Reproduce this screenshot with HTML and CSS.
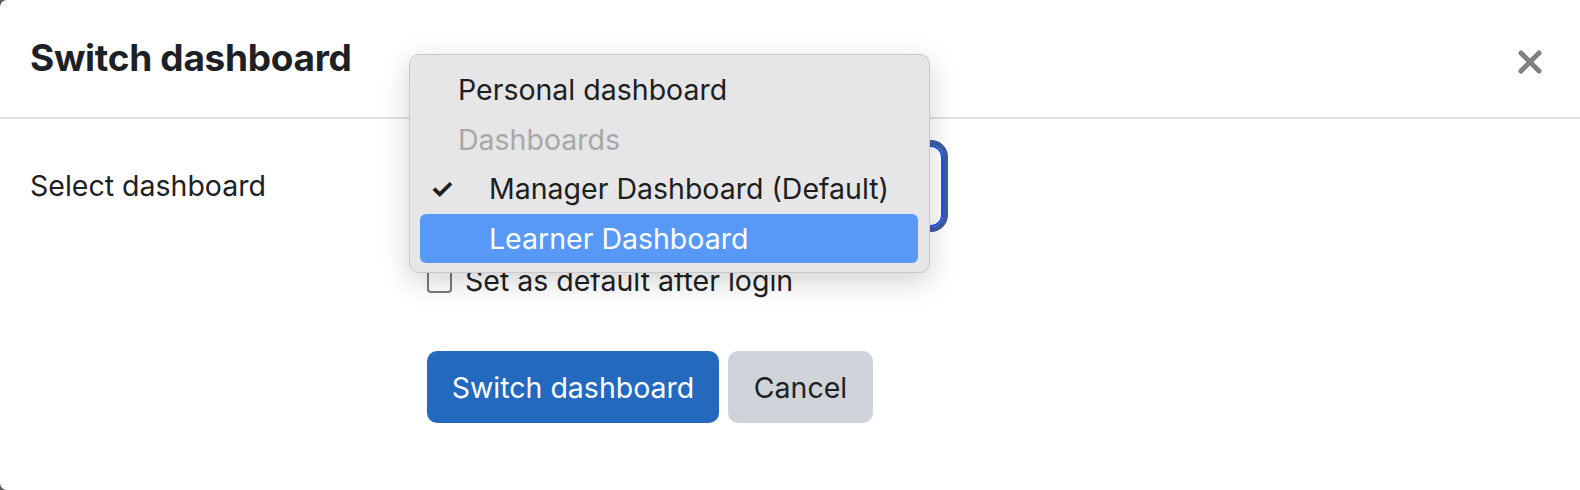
FILE: index.html
```html
<!DOCTYPE html>
<html>
<head>
<meta charset="utf-8">
<link rel="stylesheet" href="styles.css">
</head>
<body>
<div class="modal">
  <div class="modal-header">
    <h5 class="modal-title">Switch dashboard</h5>
    <button class="close" aria-label="Close">
      <svg width="24" height="24" viewBox="0 0 24 24"><path d="M3 3 L21 21 M21 3 L3 21" stroke="#808080" stroke-width="5" stroke-linecap="round"/></svg>
    </button>
  </div>
  <div class="modal-body">
    <div class="form-row">
      <label class="form-label">Select dashboard</label>
      <div class="form-control-col">
        <div class="select-wrap">
          <div class="select"></div>
          <div class="dropdown">
            <div class="opt top">Personal dashboard</div>
            <div class="opt group">Dashboards</div>
            <div class="opt sub checked"><span class="check">✓</span>Manager Dashboard (Default)</div>
            <div class="opt sub hl">Learner Dashboard</div>
          </div>
        </div>
        <label class="checkbox-row"><span class="checkbox"></span>Set as default after login</label>
        <div class="buttons">
          <button class="btn btn-primary">Switch dashboard</button>
          <button class="btn btn-secondary">Cancel</button>
        </div>
      </div>
    </div>
  </div>
</div>
</body>
</html>
```
FILE: styles.css
```css
html, body {
  margin: 0;
  padding: 0;
  background: #5a5a5a;
}
body {
  font-family: Inter, "Noto Sans", sans-serif;
  color: #1d2125;
}
.modal {
  background: #fff;
  height: 490px;
  width: 1580px;
  border-radius: 7px 0 0 7px;
  overflow: hidden;
}
.modal-header {
  height: 117px;
  border-bottom: 2px solid #dee2e6;
  display: flex;
  align-items: center;
  justify-content: space-between;
  padding: 0 38px 0 30px;
  box-sizing: content-box;
}
.modal-title {
  margin: 0;
  font-size: 37px;
  font-weight: 700;
  letter-spacing: -0.3px;
  position: relative;
  top: -1px;
}
.close {
  border: 0;
  background: none;
  padding: 0;
  margin: 0;
  display: flex;
  position: relative;
  top: 3px;
}
.modal-body {
  padding: 26px 30px 0 30px;
}
.form-row {
  display: flex;
}
.form-label {
  width: 397px;
  flex: none;
  font-size: 28.5px;
  line-height: 82px;
  height: 82px;
}
.form-control-col {
  display: flex;
  flex-direction: column;
}
.select-wrap {
  position: relative;
  width: 516px;
  height: 82px;
}
.select {
  box-sizing: border-box;
  height: 82px;
  width: 516px;
  border: 2px solid #1a55e6;
  box-shadow: 0 0 0 5px #3e5aa2;
  border-radius: 12px;
}
.dropdown {
  position: absolute;
  left: -18px;
  top: -91px;
  width: 521px;
  height: 219px;
  box-sizing: border-box;
  background: #e6e6e8;
  border: 1px solid #c9c9cb;
  border-radius: 10px;
  box-shadow: 0 8px 28px rgba(0, 0, 0, 0.18);
  padding: 10px 11px 9px 10px;
  display: flex;
  flex-direction: column;
}
.opt {
  height: 49.5px;
  line-height: 49.5px;
  font-size: 28.5px;
  color: #1e1e1e;
  padding-left: 38px;
  position: relative;
  border-radius: 6px;
  white-space: nowrap;
}
.opt.group {
  color: #a8a8aa;
}
.opt.sub {
  padding-left: 69px;
}
.opt .check {
  position: absolute;
  left: 10px;
  top: 0;
  font-size: 27px;
  font-weight: 700;
}
.opt.hl {
  background: #5899f8;
  color: #fff;
}
.checkbox-row {
  display: flex;
  align-items: center;
  margin-top: 42px;
  font-size: 28.5px;
  height: 23px;
}
.checkbox {
  width: 21px;
  height: 21px;
  border: 2px solid #7a7a7a;
  border-radius: 4px;
  margin-right: 13px;
  background: #fff;
  flex: none;
}
.buttons {
  display: flex;
  gap: 9px;
  margin-top: 59px;
}
.btn {
  height: 72px;
  border: 0;
  border-radius: 10px;
  font-family: Inter, "Noto Sans", sans-serif;
  font-size: 28.5px;
  padding: 0;
  cursor: pointer;
}
.btn-primary {
  background: #2369bd;
  color: #fff;
  width: 292px;
}
.btn-secondary {
  background: #ced4da;
  color: #1d2125;
  width: 145px;
}
```
